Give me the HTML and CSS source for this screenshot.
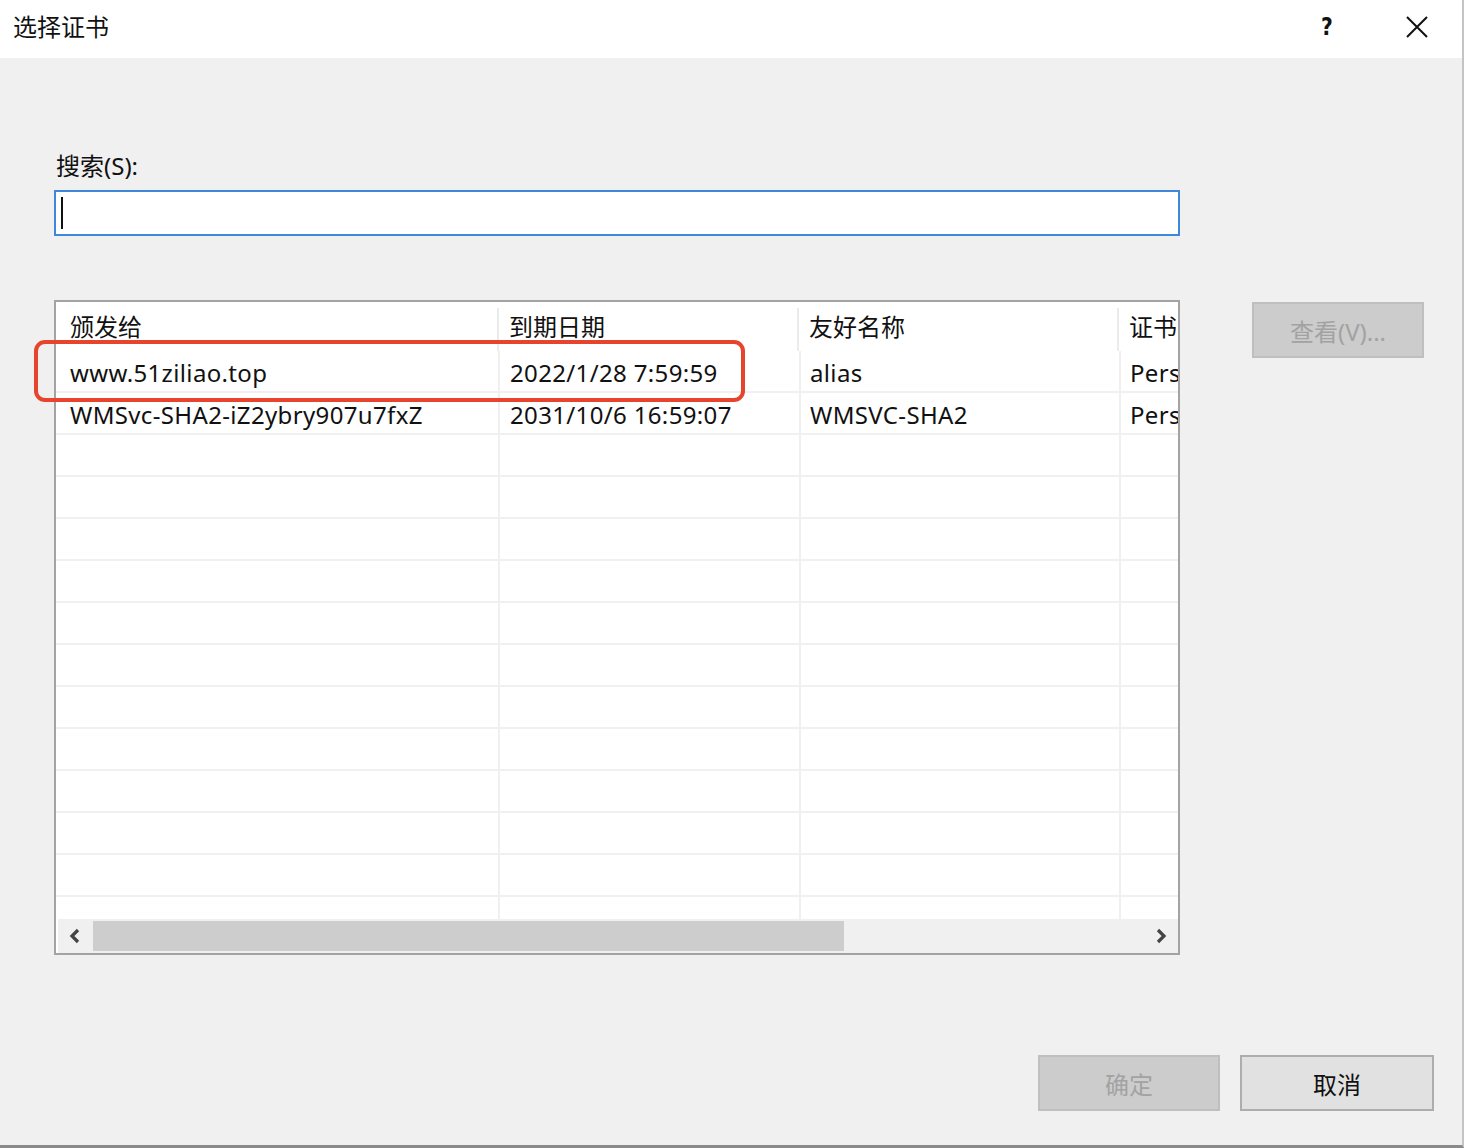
FILE: index.html
```html
<!DOCTYPE html>
<html lang="zh-CN">
<head>
<meta charset="utf-8">
<title>选择证书</title>
<link rel="stylesheet" href="styles.css">
</head>
<body>
<div class="window">
  <div class="titlebar">
    <div class="title">选择证书</div>
    <div class="title-actions">
      <span class="help">?</span>
      <svg class="close" width="22" height="22" viewBox="0 0 22 22"><path d="M1 1L21 21M21 1L1 21" stroke="#111" stroke-width="2" fill="none"/></svg>
    </div>
  </div>
  <div class="content">
    <label class="search-label">搜索(S):</label>
    <div class="search-box"><span class="caret"></span></div>

    <div class="middle">
      <div class="list-wrap">
        <div class="list">
          <div class="viewport">
            <div class="header">
              <div class="hcell c1">颁发给</div>
              <div class="hcell c2">到期日期</div>
              <div class="hcell c3">友好名称</div>
              <div class="hcell c4">证书</div>
            </div>
            <div class="rows">
              <div class="row"><div class="cell c1">www.51ziliao.top</div><div class="cell c2">2022/1/28 7:59:59</div><div class="cell c3">alias</div><div class="cell c4">Personal</div></div>
              <div class="row"><div class="cell c1">WMSvc-SHA2-iZ2ybry907u7fxZ</div><div class="cell c2">2031/10/6 16:59:07</div><div class="cell c3">WMSVC-SHA2</div><div class="cell c4">Personal</div></div>
              <div class="row"><div class="cell c1"></div><div class="cell c2"></div><div class="cell c3"></div><div class="cell c4"></div></div>
              <div class="row"><div class="cell c1"></div><div class="cell c2"></div><div class="cell c3"></div><div class="cell c4"></div></div>
              <div class="row"><div class="cell c1"></div><div class="cell c2"></div><div class="cell c3"></div><div class="cell c4"></div></div>
              <div class="row"><div class="cell c1"></div><div class="cell c2"></div><div class="cell c3"></div><div class="cell c4"></div></div>
              <div class="row"><div class="cell c1"></div><div class="cell c2"></div><div class="cell c3"></div><div class="cell c4"></div></div>
              <div class="row"><div class="cell c1"></div><div class="cell c2"></div><div class="cell c3"></div><div class="cell c4"></div></div>
              <div class="row"><div class="cell c1"></div><div class="cell c2"></div><div class="cell c3"></div><div class="cell c4"></div></div>
              <div class="row"><div class="cell c1"></div><div class="cell c2"></div><div class="cell c3"></div><div class="cell c4"></div></div>
              <div class="row"><div class="cell c1"></div><div class="cell c2"></div><div class="cell c3"></div><div class="cell c4"></div></div>
              <div class="row"><div class="cell c1"></div><div class="cell c2"></div><div class="cell c3"></div><div class="cell c4"></div></div>
              <div class="row"><div class="cell c1"></div><div class="cell c2"></div><div class="cell c3"></div><div class="cell c4"></div></div>
              <div class="row"><div class="cell c1"></div><div class="cell c2"></div><div class="cell c3"></div><div class="cell c4"></div></div>
            </div>
          </div>
          <div class="hscroll">
            <div class="arrow"><svg width="14" height="16" viewBox="0 0 14 16"><path d="M10 2L4 8L10 14" stroke="#444" stroke-width="3.2" fill="none"/></svg></div>
            <div class="track"><div class="thumb"></div></div>
            <div class="arrow"><svg width="14" height="16" viewBox="0 0 14 16"><path d="M4 2L10 8L4 14" stroke="#444" stroke-width="3.2" fill="none"/></svg></div>
          </div>
        </div>
        <div class="highlight"></div>
      </div>
      <button class="btn view-btn" disabled>查看(V)...</button>
    </div>

    <div class="footer">
      <button class="btn ok-btn" disabled>确定</button>
      <button class="btn cancel-btn">取消</button>
    </div>
  </div>
</div>
</body>
</html>
```

FILE: styles.css
```css
* { box-sizing: border-box; }
html, body { margin: 0; padding: 0; }
body {
  font-family: "Noto Sans", "Noto Sans CJK SC", sans-serif;
  font-size: 24px;
  color: #111;
  background: #f0f0f0;
}
.window {
  width: 1464px;
  height: 1148px;
  display: flex;
  flex-direction: column;
  border-right: 2px solid #c4c4c4;
  border-bottom: 3px solid #8a8a8a;
  background: #f0f0f0;
}
.titlebar {
  height: 58px;
  background: #fff;
  display: flex;
  align-items: center;
  justify-content: space-between;
  flex: none;
}
.title {
  padding-left: 13px;
  font-size: 24px;
  line-height: 30px;
  margin-top: -4px;
}
.title-actions {
  display: flex;
  align-items: center;
  gap: 72px;
  padding-right: 34px;
  margin-top: -4px;
}
.help {
  font-size: 24px;
  font-weight: 700;
  line-height: 24px;
  font-family: "DejaVu Sans", sans-serif;
  transform: scaleX(0.85);
}
.close { display: block; }

.content {
  flex: 1;
  display: flex;
  flex-direction: column;
  padding: 92px 0 0 54px;
}
.search-label {
  display: block;
  padding-left: 2px;
  line-height: 32px;
  height: 32px;
}
.search-box {
  margin-top: 8px;
  width: 1126px;
  height: 46px;
  background: #fff;
  border: 2px solid #3f87da;
  padding: 5px 0 0 5px;
}
.caret {
  display: block;
  width: 2px;
  height: 32px;
  background: #111;
}

.middle {
  display: flex;
  align-items: flex-start;
  margin-top: 64px;
  gap: 72px;
}
.list-wrap {
  position: relative;
  flex: none;
}
.list {
  width: 1126px;
  height: 655px;
  border: 2px solid #a3a3a3;
  background: #fff;
  display: flex;
  flex-direction: column;
}
.viewport {
  flex: 1;
  overflow: hidden;
  display: flex;
  flex-direction: column;
}
.header {
  display: flex;
  height: 49px;
  flex: none;
}
.hcell {
  flex: none;
  padding: 9px 0 0 14px;
  line-height: 32px;
  white-space: nowrap;
  overflow: hidden;
  background: linear-gradient(#ebebeb, #ebebeb) right 6px / 2px calc(100% - 6px) no-repeat;
}
.hcell.c2, .hcell.c3 { padding-left: 10px; }
.hcell.c4 { background: none; padding-left: 10px; }
.c1 { width: 443px; }
.c2 { width: 300px; }
.c3 { width: 320px; }
.c4 { width: 200px; }
.rows {
  flex: 1;
  overflow: hidden;
}
.row {
  display: flex;
  height: 42px;
  border-bottom: 2px solid #f0f0f0;
}
.cell {
  flex: none;
  padding: 5px 0 0 14px;
  line-height: 34px;
  white-space: nowrap;
  overflow: hidden;
  border-right: 2px solid #f0f0f0;
  letter-spacing: 0.35px;
}
.cell.c1 { width: 444px; }
.cell.c2 { width: 301px; padding-left: 10px; }
.cell.c3 { width: 320px; padding-left: 9px; }
.cell.c4 { border-right: none; padding-left: 9px; }

.hscroll {
  height: 34px;
  flex: none;
  display: flex;
  align-items: stretch;
  background: #f0f0f0;
  margin: 0 0 0 2px;
}
.arrow {
  width: 34px;
  flex: none;
  display: flex;
  align-items: center;
  justify-content: center;
}
.track {
  flex: 1;
  display: flex;
  align-items: center;
}
.thumb {
  width: 751px;
  height: 30px;
  background: #cdcdcd;
  margin-left: 1px;
}
.highlight {
  position: absolute;
  left: -20px;
  top: 40px;
  width: 711px;
  height: 62px;
  border: 4px solid #e6442c;
  border-radius: 11px;
  pointer-events: none;
}

.btn {
  font-family: "Noto Sans", "Noto Sans CJK SC", sans-serif;
  font-size: 24px;
  height: 56px;
  padding: 0;
  border: 2px solid #adadad;
  background: #e1e1e1;
  color: #111;
}
.btn[disabled] {
  background: #cccccc;
  border-color: #bfbfbf;
  color: #a2a2a2;
}
.view-btn {
  width: 172px;
  margin-top: 2px;
}
.footer {
  display: flex;
  justify-content: flex-end;
  gap: 20px;
  margin-top: 100px;
  padding-right: 28px;
}
.ok-btn { width: 182px; }
.cancel-btn { width: 194px; }
```
